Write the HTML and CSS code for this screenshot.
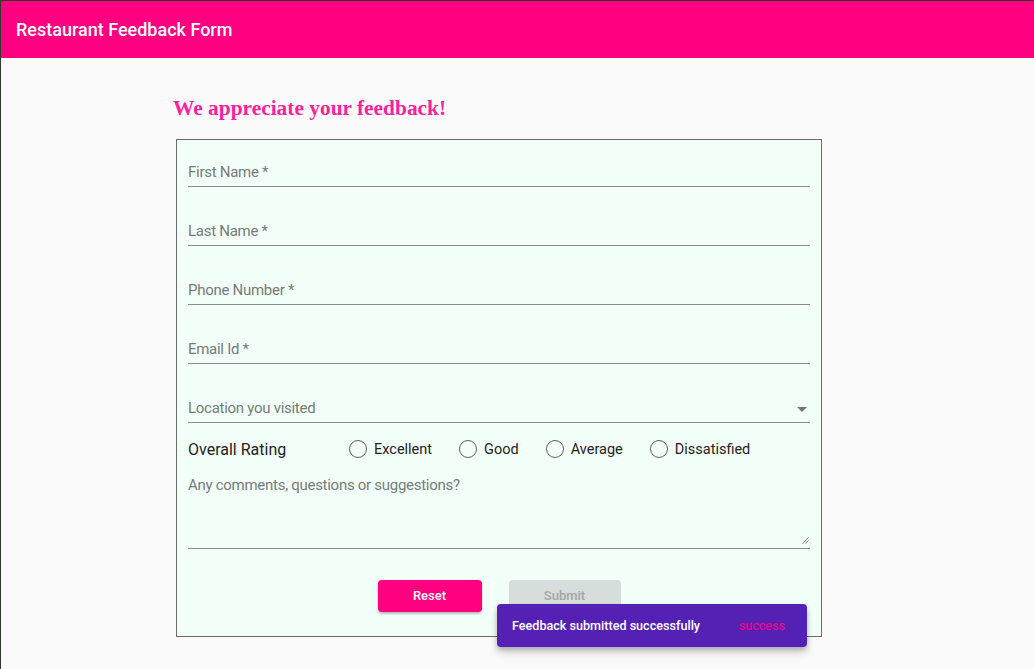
FILE: index.html
```html
<!DOCTYPE html>
<html>
<head>
<meta charset="utf-8">
<link rel="stylesheet" href="styles.css">
</head>
<body>
<header class="toolbar">Restaurant Feedback Form</header>
<main class="page">
  <h2 class="heading">We appreciate your feedback!</h2>
  <form class="card">
    <div class="fields">
      <label class="field"><span class="ph">First Name *</span></label>
      <label class="field"><span class="ph">Last Name *</span></label>
      <label class="field"><span class="ph">Phone Number *</span></label>
      <label class="field"><span class="ph">Email Id *</span></label>
      <label class="field select"><span class="ph">Location you visited</span><span class="arrow"></span></label>
    </div>
    <div class="rating">
      <span class="rating-label">Overall Rating</span>
      <span class="opt"><span class="circle"></span>Excellent</span>
      <span class="opt"><span class="circle"></span>Good</span>
      <span class="opt"><span class="circle"></span>Average</span>
      <span class="opt"><span class="circle"></span>Dissatisfied</span>
    </div>
    <div class="textarea">
      <span class="ph">Any comments, questions or suggestions?</span>
      <svg class="grip" width="8" height="8" viewBox="0 0 8 8"><path d="M7.5 1.5L1.5 7.5M7.5 4.5L4.5 7.5" stroke="#777" stroke-width="1"/></svg>
    </div>
    <div class="actions">
      <button type="button" class="btn reset">Reset</button>
      <button type="button" class="btn submit" disabled>Submit</button>
    </div>
  </form>
</main>
<div class="snackbar"><span class="msg">Feedback submitted successfully</span><span class="action">success</span></div>
</body>
</html>
```
FILE: styles.css
```css
html { background: #2d382d; height: 100%; }
body {
  margin: 1px 0 0 1px;
  min-height: calc(100% - 1px);
  background: #fafafa;
  font-family: Roboto, "Noto Sans", sans-serif;
}
.toolbar {
  height: 57px;
  background: #ff0080;
  color: #fff;
  font-size: 18px;
  font-weight: 500;
  display: flex;
  align-items: center;
  padding-left: 15px;
}
.page {
  padding-left: 175px;
  padding-bottom: 32px;
}
.heading {
  margin: 0;
  padding: 36px 0 17px 0;
  font-family: "Liberation Serif", serif;
  font-weight: bold;
  font-size: 21.4px;
  line-height: 28px;
  color: #ff1f9f;
  margin-left: -3px;
}
.card {
  width: 622px;
  border: 1px solid #6a6a6a;
  background: #f3fff9;
  padding: 20px 11px 24px 11px;
  margin: 0;
}
.fields {
  display: flex;
  flex-direction: column;
  gap: 32px;
}
.field {
  display: flex;
  align-items: center;
  height: 24px;
  padding-bottom: 2px;
  border-bottom: 1px solid #8c8c8c;
  position: relative;
}
.ph {
  font-size: 15px;
  letter-spacing: -0.28px;
  color: #767b7a;
  line-height: 24px;
}
.arrow {
  margin-left: auto;
  margin-right: 3px;
  width: 0;
  height: 0;
  border-left: 5px solid transparent;
  border-right: 5px solid transparent;
  border-top: 5px solid #757575;
  margin-top: 3px;
}
.rating {
  display: flex;
  align-items: center;
  height: 24px;
  margin-top: 14px;
  font-size: 14.5px;
  color: #222;
}
.rating-label {
  width: 161px;
  font-size: 16px;
}
.opt {
  display: flex;
  align-items: center;
  margin-right: 27px;
}
.circle {
  width: 16px;
  height: 16px;
  border: 1.5px solid #5f5f5f;
  border-radius: 50%;
  margin-right: 7px;
}
.textarea {
  margin-top: 12px;
  height: 75px;
  border-bottom: 1px solid #8c8c8c;
  position: relative;
}
.grip {
  position: absolute;
  right: 1px;
  bottom: 4px;
}
.actions {
  display: flex;
  justify-content: center;
  gap: 27px;
  margin-top: 31px;
}
.btn {
  height: 32px;
  border: none;
  border-radius: 4px;
  font-family: Roboto, sans-serif;
  font-size: 13px;
  font-weight: 500;
  padding: 0 0 2px 0;
}
.reset {
  width: 104px;
  background: #ff0080;
  color: #fff;
  box-shadow: 0 2px 2px rgba(0,0,0,.18), 0 1px 4px rgba(0,0,0,.12);
}
.submit {
  width: 112px;
  background: #d6ddda;
  color: #a3a7a6;
}
.snackbar {
  position: absolute;
  left: 497px;
  top: 604px;
  width: 310px;
  height: 43px;
  box-sizing: border-box;
  background: #5521b5;
  border-radius: 4px;
  box-shadow: 0 3px 5px rgba(0,0,0,.2), 0 6px 10px rgba(0,0,0,.14);
  display: flex;
  align-items: center;
  padding: 0 22px 0 15px;
  font-size: 12.6px;
}
.msg { color: #fff; font-weight: 500; }
.action { margin-left: auto; color: #ff0080; }
```
